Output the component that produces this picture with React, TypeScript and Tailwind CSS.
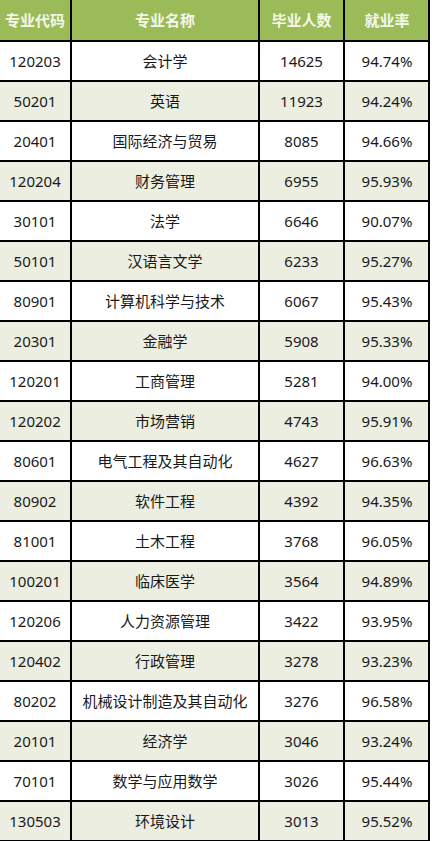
const rows = [
  ['120203', '会计学', '14625', '94.74%'],
  ['50201', '英语', '11923', '94.24%'],
  ['20401', '国际经济与贸易', '8085', '94.66%'],
  ['120204', '财务管理', '6955', '95.93%'],
  ['30101', '法学', '6646', '90.07%'],
  ['50101', '汉语言文学', '6233', '95.27%'],
  ['80901', '计算机科学与技术', '6067', '95.43%'],
  ['20301', '金融学', '5908', '95.33%'],
  ['120201', '工商管理', '5281', '94.00%'],
  ['120202', '市场营销', '4743', '95.91%'],
  ['80601', '电气工程及其自动化', '4627', '96.63%'],
  ['80902', '软件工程', '4392', '94.35%'],
  ['81001', '土木工程', '3768', '96.05%'],
  ['100201', '临床医学', '3564', '94.89%'],
  ['120206', '人力资源管理', '3422', '93.95%'],
  ['120402', '行政管理', '3278', '93.23%'],
  ['80202', '机械设计制造及其自动化', '3276', '96.58%'],
  ['20101', '经济学', '3046', '93.24%'],
  ['70101', '数学与应用数学', '3026', '95.44%'],
  ['130503', '环境设计', '3013', '95.52%'],
]

const cols = 'grid grid-cols-[72px_188px_85px_84px]'

export default function App() {
  return (
    <div className="w-[432px] h-[841px] bg-white font-['Noto_Sans','Noto_Sans_CJK_SC',sans-serif]">
      <div className="w-[430px] border-r-2 border-b-2 border-black">
        {/* header */}
        <div className={`${cols} h-[40px] bg-[#9bbb59] text-[#f4f7ea] text-[15px] font-bold`}>
          {['专业代码', '专业名称', '毕业人数', '就业率'].map((h, i) => (
            <div
              key={h}
              className={`flex items-center justify-center ${i < 3 ? 'border-r-2 border-black' : ''}`}
            >
              {h}
            </div>
          ))}
        </div>
        {rows.map((r, ri) => (
          <div
            key={r[0] + ri}
            className={`${cols} h-[40px] border-t-2 border-black text-[15px] text-[#1a1a1a] ${ri % 2 ? 'bg-[#ebeee0]' : 'bg-white'}`}
          >
            {r.map((c, i) => (
              <div
                key={i}
                className={`flex items-center justify-center ${i < 3 ? 'border-r-2 border-black' : ''}`}
              >
                {c}
              </div>
            ))}
          </div>
        ))}
      </div>
    </div>
  )
}
